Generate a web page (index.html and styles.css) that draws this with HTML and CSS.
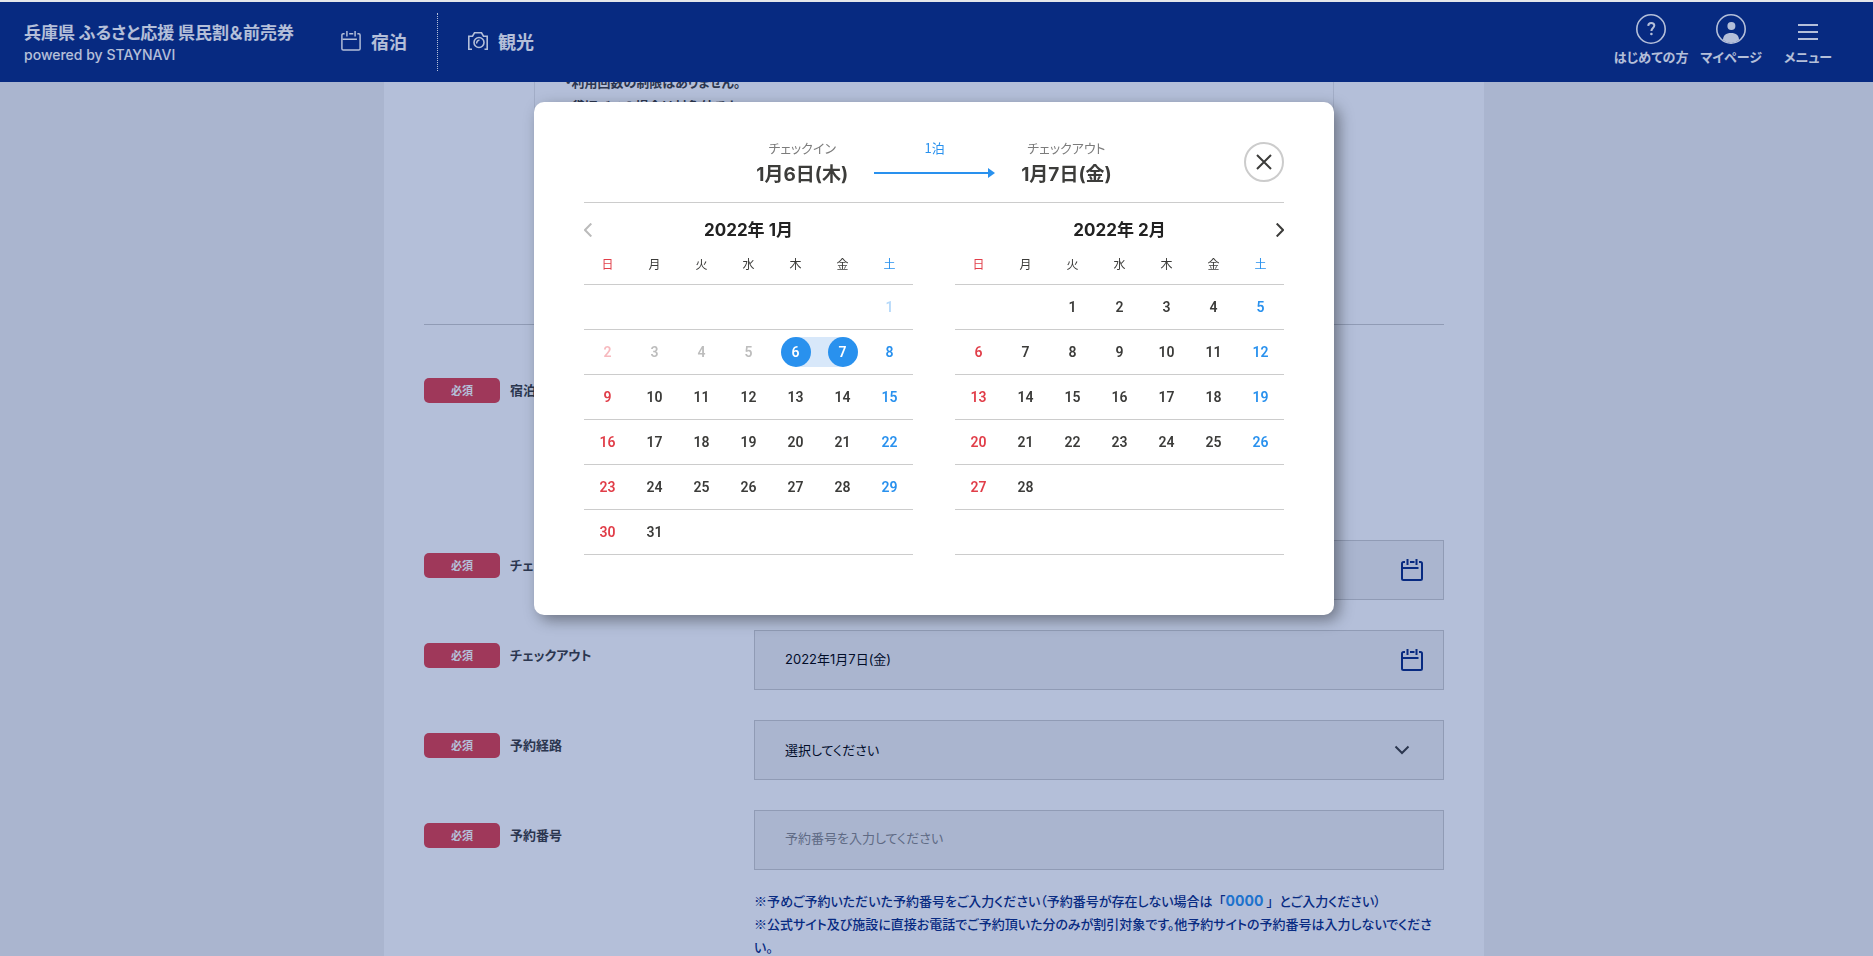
FILE: index.html
```
<!DOCTYPE html>
<html lang="ja">
<head>
<meta charset="utf-8">
<title>兵庫県 ふるさと応援 県民割＆前売券</title>
<link rel="stylesheet" href="styles.css">
</head>
<body>
<svg class="sprite" aria-hidden="true">
  <symbol id="i-calendar" viewBox="0 0 22 22">
    <path d="M4 3H2.500A1.500 1.500 0 0 0 1 4.500V19.500A1.500 1.500 0 0 0 2.500 21H19.500A1.500 1.500 0 0 0 21 19.500V4.500A1.500 1.500 0 0 0 19.500 3H18M9 3H13.500M6.500 0V6M15.500 0V6M2 9H17.500"/>
  </symbol>
</svg>

<header class="header">
  <a class="brand" href="#">
    <span class="brand-name">兵庫県 ふるさと応援 県民割＆前売券</span>
    <span class="brand-sub">powered by STAYNAVI</span>
  </a>
  <nav class="nav">
    <a class="nav-link" href="#"><svg class="nav-icon" aria-hidden="true"><use href="#i-calendar"/></svg>宿泊</a>
    <a class="nav-link" href="#"><svg class="nav-icon" viewBox="0 0 20 20" aria-hidden="true"><path d="M4 18.200H0.800V5.200H4.500L6.500 1.800H13.500L15.500 5.200H19.200V18.200H16.500"/><circle cx="11" cy="11.500" r="5"/><path d="M8.800 12.500A2.500 2.500 0 0 1 11.500 9.300"/></svg>観光</a>
  </nav>
  <nav class="tools">
    <a class="tool" href="#">
      <svg class="tool-icon" viewBox="0 0 30 30" aria-hidden="true"><circle class="line" cx="15" cy="15" r="14.200"/><path class="line thick" d="M12.200 11.800C12.400 9.900 13.600 9 15.200 9C17 9 18.300 10 18.300 11.600C18.300 13.900 15.400 14.200 15.400 17"/><circle cx="15.400" cy="20" r="1.300"/></svg>
      はじめての方
    </a>
    <a class="tool" href="#">
      <svg class="tool-icon" viewBox="0 0 30 30" aria-hidden="true"><circle class="line" cx="15" cy="15" r="14.200"/><circle cx="15.400" cy="12" r="4"/><path d="M7 26C7 21.500 10 19 15 19S23 21.500 23 26Q19.500 29 15 29T7 26Z"/></svg>
      マイページ
    </a>
    <button class="tool" type="button">
      <svg class="tool-icon" viewBox="0 0 30 30" aria-hidden="true"><path class="line heavy" d="M5 11H25M5 18H25M5 25H25"/></svg>
      メニュー
    </button>
  </nav>
</header>

<div class="page">
  <main class="main">
    <div class="notice">
      <p>・利用回数の制限はありません。</p>
      <p>・貸切バスの場合は対象外です。</p>
    </div>
    <form class="form">
      <div class="row row-tall">
        <span class="badge">必須</span>
        <span class="label">宿泊施設</span>
      </div>
      <div class="row">
        <span class="badge">必須</span>
        <label class="label" for="checkin">チェックイン</label>
        <div class="field"><input class="input" id="checkin" type="text" value="2022年1月6日(木)"><svg class="field-icon" aria-hidden="true"><use href="#i-calendar"/></svg></div>
      </div>
      <div class="row">
        <span class="badge">必須</span>
        <label class="label" for="checkout">チェックアウト</label>
        <div class="field"><input class="input" id="checkout" type="text" value="2022年1月7日(金)"><svg class="field-icon" aria-hidden="true"><use href="#i-calendar"/></svg></div>
      </div>
      <div class="row">
        <span class="badge">必須</span>
        <label class="label" for="route">予約経路</label>
        <div class="field"><select class="input select" id="route"><option>選択してください</option></select><svg class="field-arrow" viewBox="0 0 16 10" aria-hidden="true"><path d="M1.500 1.500L8 8L14.500 1.500"/></svg></div>
      </div>
      <div class="row">
        <span class="badge">必須</span>
        <label class="label" for="number">予約番号</label>
        <div class="field">
          <input class="input" id="number" type="text" placeholder="予約番号を入力してください">
          <p class="note">※予めご予約いただいた予約番号をご入力ください（予約番号が存在しない場合は<span class="sample">「<strong>0000</strong> 」</span>とご入力ください）<br>※公式サイト及び施設に直接お電話でご予約頂いた分のみが割引対象です。他予約サイトの予約番号は入力しないでください。</p>
        </div>
      </div>
    </form>
  </main>
</div>

<div class="overlay">
  <section class="modal" role="dialog" aria-label="宿泊日の選択">
    <div class="stay">
      <div class="stay-date"><span>チェックイン</span><b>1月6日(木)</b></div>
      <div class="nights"><span>1泊</span><svg class="arrow" viewBox="0 0 121 10" aria-hidden="true"><path class="shaft" d="M0 5H115"/><path d="M114 0L121 5L114 10Z"/></svg></div>
      <div class="stay-date"><span>チェックアウト</span><b>1月7日(金)</b></div>
      <button class="close" type="button" aria-label="閉じる"><svg viewBox="0 0 16 16" aria-hidden="true"><path d="M1 1L15 15M15 1L1 15"/></svg></button>
    </div>
    <div class="months">
      <div class="month">
        <div class="month-head">
          <button class="step prev" type="button" aria-label="前の月" disabled><svg viewBox="0 0 8 14" aria-hidden="true"><path d="M7.300 0.500L1 7L7.300 13.500"/></svg></button>
          <h2>2022年 1月</h2>
        </div>
        <table class="cal">
          <thead><tr><th>日</th><th>月</th><th>火</th><th>水</th><th>木</th><th>金</th><th>土</th></tr></thead>
          <tbody>
            <tr><td></td><td></td><td></td><td></td><td></td><td></td><td class="off">1</td></tr>
            <tr><td class="off">2</td><td class="off">3</td><td class="off">4</td><td class="off">5</td><td class="from"><span>6</span></td><td class="to"><span>7</span></td><td>8</td></tr>
            <tr><td>9</td><td>10</td><td>11</td><td>12</td><td>13</td><td>14</td><td>15</td></tr>
            <tr><td>16</td><td>17</td><td>18</td><td>19</td><td>20</td><td>21</td><td>22</td></tr>
            <tr><td>23</td><td>24</td><td>25</td><td>26</td><td>27</td><td>28</td><td>29</td></tr>
            <tr><td>30</td><td>31</td><td></td><td></td><td></td><td></td><td></td></tr>
          </tbody>
        </table>
      </div>
      <div class="month">
        <div class="month-head">
          <h2>2022年 2月</h2>
          <button class="step next" type="button" aria-label="次の月"><svg viewBox="0 0 8 14" aria-hidden="true"><path d="M0.700 0.500L7 7L0.700 13.500"/></svg></button>
        </div>
        <table class="cal">
          <thead><tr><th>日</th><th>月</th><th>火</th><th>水</th><th>木</th><th>金</th><th>土</th></tr></thead>
          <tbody>
            <tr><td></td><td></td><td>1</td><td>2</td><td>3</td><td>4</td><td>5</td></tr>
            <tr><td>6</td><td>7</td><td>8</td><td>9</td><td>10</td><td>11</td><td>12</td></tr>
            <tr><td>13</td><td>14</td><td>15</td><td>16</td><td>17</td><td>18</td><td>19</td></tr>
            <tr><td>20</td><td>21</td><td>22</td><td>23</td><td>24</td><td>25</td><td>26</td></tr>
            <tr><td>27</td><td>28</td><td></td><td></td><td></td><td></td><td></td></tr>
            <tr><td></td><td></td><td></td><td></td><td></td><td></td><td></td></tr>
          </tbody>
        </table>
      </div>
    </div>
  </section>
</div>
</body>
</html>
```
FILE: styles.css
```
:root {
  --navy: #082a82;
  --blue: #2991ee;
  --red: #e13e49;
  --ink: #3c3c3a;
  --rule: #ccc;
  --gutter: 5px;
}

* { box-sizing: border-box; }

body {
  margin: 0;
  height: 100vh;
  overflow: hidden;
  border-top: 2px solid #e4e6ea;
  background: #f1f1f1;
  color: var(--ink);
  font: 13px/1.8 "Noto Sans CJK JP", sans-serif;
  font-feature-settings: "palt";
}

p, h2 { margin: 0; }
a { color: inherit; text-decoration: none; }
button { padding: 0; border: 0; background: none; color: inherit; font: inherit; cursor: pointer; }
svg { display: block; fill: none; stroke: currentColor; }
.sprite { position: absolute; width: 0; height: 0; }

/* header */
.header {
  position: relative;
  z-index: 1;
  display: flex;
  align-items: center;
  height: 80px;
  padding: 0 24px;
  background: var(--navy);
  color: #fff;
}
.brand { display: flex; flex-direction: column; margin-right: 31px; padding-top: 2px; }
.brand-name { font-size: 17px; font-weight: 700; line-height: 24px; }
.brand-sub { font: 500 14px/22px Inter, sans-serif; }
.nav { display: flex; flex: 1; }
.nav-link {
  display: flex;
  align-items: center;
  gap: 10px;
  height: 58px;
  padding: 0 30px 2px 16px;
  font-size: 18px;
  font-weight: 700;
}
.nav-link + .nav-link { padding-left: 30px; border-left: 1px dotted #fff; }
.nav-icon { width: 20px; height: 20px; stroke-width: 1.6; }
.tools { display: flex; gap: 12px; margin-right: 17px; padding-bottom: 3px; }
.tool {
  display: flex;
  flex-direction: column;
  align-items: center;
  gap: 3px;
  color: #fff;
  font-size: 13px;
  font-weight: 700;
  line-height: 20px;
}
button.tool { margin-left: 10px; }
.tool-icon { width: 30px; height: 30px; fill: currentColor; stroke: none; }
.tool-icon .line { fill: none; stroke: currentColor; stroke-width: 1.6; }
.tool-icon .thick, .tool-icon .heavy { stroke-width: 2; }

/* form page */
.page { padding-right: var(--gutter); }
.main {
  width: 1100px;
  max-width: 100%;
  margin: -23px auto 0;
  padding: 0 40px;
  background: #fff;
}
.notice {
  width: 800px;
  max-width: 100%;
  height: 224px;
  margin: 0 auto;
  padding: 11px 30px;
  border: 1px solid #e6e6e6;
  border-top: 0;
  font-weight: 700;
  line-height: 24px;
}
.form { margin-top: 41px; padding-top: 40px; border-top: 1px solid var(--rule); }
.row {
  display: grid;
  grid-template-columns: 76px 1fr 690px;
  column-gap: 10px;
  align-items: start;
  min-height: 90px;
}
.row-tall { min-height: 175px; }
.badge {
  margin-top: 13px;
  border-radius: 5px;
  background: var(--red);
  color: #fff;
  font-size: 11px;
  font-weight: 700;
  line-height: 25px;
  text-align: center;
}
.label { margin-top: 13px; font-weight: 700; line-height: 24px; }
.field { position: relative; }
.input {
  display: block;
  width: 100%;
  height: 60px;
  padding: 0 30px 4px;
  border: 1px solid var(--rule);
  border-radius: 0;
  background: #f1f1f1;
  color: #000;
  font: 13px Inter, "Noto Sans CJK JP", sans-serif;
  font-feature-settings: inherit;
  appearance: none;
}
.select { padding-bottom: 0; }
.input::placeholder { color: #868686; opacity: 1; }
.field-icon, .field-arrow { position: absolute; pointer-events: none; }
.field-icon { top: 19px; right: 21px; width: 22px; height: 22px; color: var(--navy); stroke-width: 2; }
.field-arrow { top: 25px; right: 34px; width: 16px; height: 10px; stroke-width: 2; }
.note { margin-top: 19px; color: var(--navy); font-weight: 500; line-height: 23px; }
.note strong { color: var(--blue); font: 700 14px/20px Inter, sans-serif; }
.sample { font-feature-settings: normal; }

/* date picker */
.overlay {
  position: fixed;
  inset: 0;
  top: 2px;
  z-index: 2;
  padding-top: 100px;
  padding-right: var(--gutter);
  background: rgba(8, 42, 130, 0.3);
}
.modal {
  width: 800px;
  max-width: 100%;
  margin: 0 auto;
  padding: 32px 50px 60px;
  border-radius: 10px;
  background: #fff;
  box-shadow: 5px 5px 15px rgba(0, 0, 0, 0.4);
}
.stay {
  position: relative;
  display: flex;
  justify-content: center;
  gap: 26px;
  padding-bottom: 14px;
  border-bottom: 1px solid var(--rule);
}
.stay-date, .nights { display: flex; flex-direction: column; align-items: center; line-height: 28px; }
.stay-date span { color: #7c7c7c; }
.stay-date b { font: 700 19px/26px Inter, "Noto Sans CJK JP", sans-serif; }
.nights { color: var(--blue); }
.arrow { width: 121px; height: 10px; margin-top: 6px; fill: currentColor; stroke: none; }
.shaft { stroke: currentColor; stroke-width: 2; }
.close {
  position: absolute;
  top: 8px;
  right: 0;
  display: grid;
  place-items: center;
  width: 40px;
  height: 40px;
  border: 2px solid var(--rule);
  border-radius: 50%;
}
.close svg { width: 16px; height: 16px; stroke-width: 2; }
.months { display: grid; grid-template-columns: 1fr 1fr; gap: 42px; padding-top: 9px; }
.month-head { position: relative; text-align: center; }
.month-head h2 { color: #222; font: 700 17px/36px Inter, "Noto Sans CJK JP", sans-serif; }
.step { position: absolute; top: 11px; }
.step svg { width: 8px; height: 14px; stroke-width: 2; }
.prev { left: 0; color: #bbb; }
.next { right: 0; }
.cal { width: 100%; border-collapse: collapse; table-layout: fixed; text-align: center; }
.cal th {
  height: 36px;
  padding: 0;
  border-bottom: 1px solid var(--rule);
  font-size: 12px;
  font-weight: 400;
  line-height: 31px;
  vertical-align: top;
}
.cal td {
  height: 45px;
  padding: 0;
  border-bottom: 1px solid var(--rule);
  font: 600 14px/30px Roboto, sans-serif;
}
.cal th:first-child, .cal td:first-child { color: var(--red); }
.cal th:last-child, .cal td:last-child { color: var(--blue); }
.cal td.off { color: #bdbdbd; }
.cal td.off:first-child { color: #f7b9be; }
.cal td.off:last-child { color: #b5d9fa; }
.cal td span { display: block; width: 30px; margin: 0 auto; border-radius: 50%; background: var(--blue); color: #fff; }
.cal .from { background: linear-gradient(#d8e8fa, #d8e8fa) right center / 24px 30px no-repeat; }
.cal .to { background: linear-gradient(#d8e8fa, #d8e8fa) left center / 24px 30px no-repeat; }
```
